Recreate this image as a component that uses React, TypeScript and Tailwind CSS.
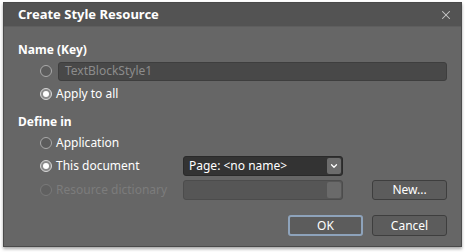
import { X, ChevronDown } from 'lucide-react'

function Radio({ checked = false, disabled = false }: { checked?: boolean; disabled?: boolean }) {
  return (
    <span
      className={
        'flex h-[12px] w-[12px] shrink-0 items-center justify-center rounded-full border ' +
        (disabled
          ? 'border-[#7a7a7a] bg-[#606060]'
          : checked
            ? 'border-[#d8d8d8] bg-[#8a8a8a]'
            : 'border-[#aaaaaa] bg-[#5c5c5c]')
      }
    >
      {checked && <span className="h-[6px] w-[6px] rounded-full bg-white" />}
    </span>
  )
}

export default function App() {
  return (
    <div className="h-[252px] w-[465px] overflow-hidden bg-white pl-[3px] pt-[2px] font-['Noto_Sans','Liberation_Sans',sans-serif] text-[12px]">
      {/* dialog */}
      <div className="flex h-[245px] w-[459px] flex-col border border-[#4a4a4a] bg-[#666666] shadow-[0_2px_3px_rgba(0,0,0,0.35)]">
        {/* title */}
        <div className="flex h-[24px] shrink-0 items-center justify-between border-b border-[#5e5e5e] bg-[#535353] pl-[14px] pr-[8px]">
          <span className="text-[13px] font-bold text-white">Create Style Resource</span>
          <X size={14} strokeWidth={1.75} className="text-[#c8c8c8]" />
        </div>

        <div className="flex flex-col px-[14px] pt-[15px]">
          <div className="font-bold leading-[16px] text-white">Name (Key)</div>

          <div className="mt-[3px] flex h-[20px] items-center pl-[22px]">
            <Radio />
            <div className="ml-[6px] flex h-[19px] w-[389px] items-center rounded-[3px] border border-[#3e3e3e] bg-[#484848] pl-[6px] text-[#8c8c8c]">
              TextBlockStyle1
            </div>
          </div>

          <div className="mt-[3px] flex h-[20px] items-center pl-[22px] text-white">
            <Radio checked />
            <span className="ml-[4px]">Apply to all</span>
          </div>

          <div className="mt-[10px] font-bold leading-[16px] text-white">Define in</div>

          <div className="mt-[3px] flex h-[20px] items-center pl-[22px] text-white">
            <Radio />
            <span className="ml-[4px]">Application</span>
          </div>

          <div className="mt-[2px] flex h-[21px] items-center pl-[22px] text-white">
            <Radio checked />
            <span className="ml-[4px] w-[127px]">This document</span>
            <div className="flex h-[20px] w-[160px] items-center justify-between rounded-[3px] border border-[#2a2a2a] bg-[#333333] pl-[5px] pr-[1px]">
              <span>Page: &lt;no name&gt;</span>
              <span className="flex h-[16px] w-[14px] items-center justify-center rounded-[2px] bg-[#6c6c6c]">
                <ChevronDown size={10} strokeWidth={3} className="text-white" />
              </span>
            </div>
          </div>

          <div className="mt-[3px] flex h-[21px] items-center pl-[22px] text-[#7c7c7c]">
            <Radio disabled />
            <span className="ml-[4px] w-[127px]">Resource dictionary</span>
            <div className="flex h-[20px] w-[160px] items-center justify-end rounded-[3px] border border-[#4c4c4c] bg-[#565656] pr-[1px]">
              <span className="h-[16px] w-[14px] rounded-[2px] bg-[#6a6a6a]" />
            </div>
            <button className="ml-[29px] flex h-[20px] w-[75px] items-center justify-center rounded-[3px] border border-[#3e3e3e] bg-[#5c5c5c] text-white">
              New...
            </button>
          </div>

          <div className="mt-[15px] flex justify-end gap-[9px]">
            <button className="flex h-[21px] w-[75px] items-center justify-center rounded-[3px] border-2 border-[#8ea3bb] bg-[#5c5c5c] text-white">
              OK
            </button>
            <button className="flex h-[21px] w-[75px] items-center justify-center rounded-[3px] border border-[#3e3e3e] bg-[#5c5c5c] text-white">
              Cancel
            </button>
          </div>
        </div>
      </div>
    </div>
  )
}
